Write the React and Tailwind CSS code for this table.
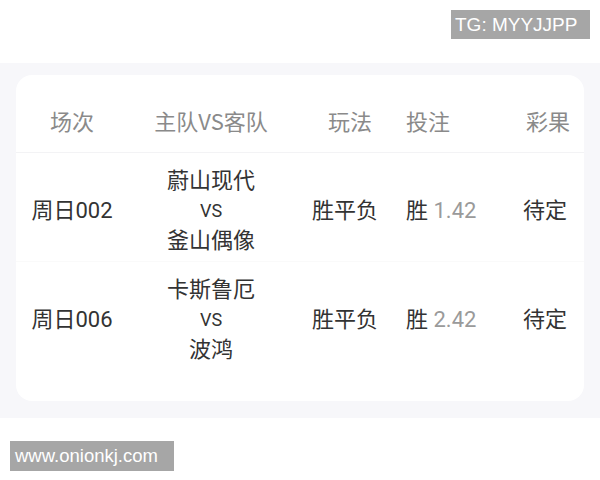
import React from 'react'

const rows = [
  { id: '周日002', home: '蔚山现代', away: '釜山偶像', play: '胜平负', pick: '胜', odds: '1.42', result: '待定' },
  { id: '周日006', home: '卡斯鲁厄', away: '波鸿', play: '胜平负', pick: '胜', odds: '2.42', result: '待定' },
]

const cjk = { fontFamily: 'Roboto, "Noto Sans CJK SC", sans-serif' }

const App = () => {
  return (
    <div className="w-[600px] h-[480px] bg-white overflow-hidden" style={cjk}>
      {/* Top watermark */}
      <div className="h-[63px] flex justify-end items-start pt-[10px] pr-[10px]">
        <div
          className="h-[29px] w-[139px] bg-[#a6a6a6] text-white text-[19px] leading-[29px] pl-[4px]"
          style={{ fontFamily: '"Liberation Sans", Arial, sans-serif' }}
        >
          TG: MYYJJPP
        </div>
      </div>

      {/* Table band */}
      <div className="bg-[#f7f7fa] px-4 pt-3 pb-[17px]">
        <div className="bg-white rounded-[16px] pb-[31px]">
          {/* Header */}
          <div
            className="flex h-[78px] pt-[30px] text-[22px] leading-[30px] text-[#8a8a8a] border-b border-[#f3f3f5]"
            style={{ fontFamily: '"Noto Sans CJK SC", sans-serif' }}
          >
            <div className="w-[112px] shrink-0 text-center">场次</div>
            <div className="w-[166px] shrink-0 text-center">主队VS客队</div>
            <div className="w-[112px] shrink-0 text-center">玩法</div>
            <div className="w-[106px] shrink-0">投注</div>
            <div className="w-[72px] shrink-0 text-center">彩果</div>
          </div>

          {/* Rows */}
          {rows.map((r, i) => (
            <div
              key={r.id}
              className={`flex items-center pt-[13px] pb-[5px] text-[22px] leading-[30px] text-[#333333] ${i === 0 ? 'border-b border-[#fafafa]' : ''}`}
            >
              <div className="w-[112px] shrink-0 text-center">{r.id}</div>
              <div className="w-[166px] shrink-0 flex flex-col items-center">
                <span>{r.home}</span>
                <span className="text-[18px]">VS</span>
                <span>{r.away}</span>
              </div>
              <div className="w-[102px] shrink-0 text-center">{r.play}</div>
              <div className="w-[110px] shrink-0 pl-[10px]">
                {r.pick} <span className="text-[#9a9a9a]">{r.odds}</span>
              </div>
              <div className="w-[78px] shrink-0 text-center">{r.result}</div>
            </div>
          ))}
        </div>
      </div>

      {/* Bottom watermark */}
      <div className="pt-[23px] pl-[10px]">
        <div
          className="h-[30px] w-[164px] bg-[#a6a6a6] text-white text-[18.5px] leading-[30px] pl-[5px]"
          style={{ fontFamily: '"Liberation Sans", Arial, sans-serif' }}
        >
          www.onionkj.com
        </div>
      </div>
    </div>
  )
}

export default App
